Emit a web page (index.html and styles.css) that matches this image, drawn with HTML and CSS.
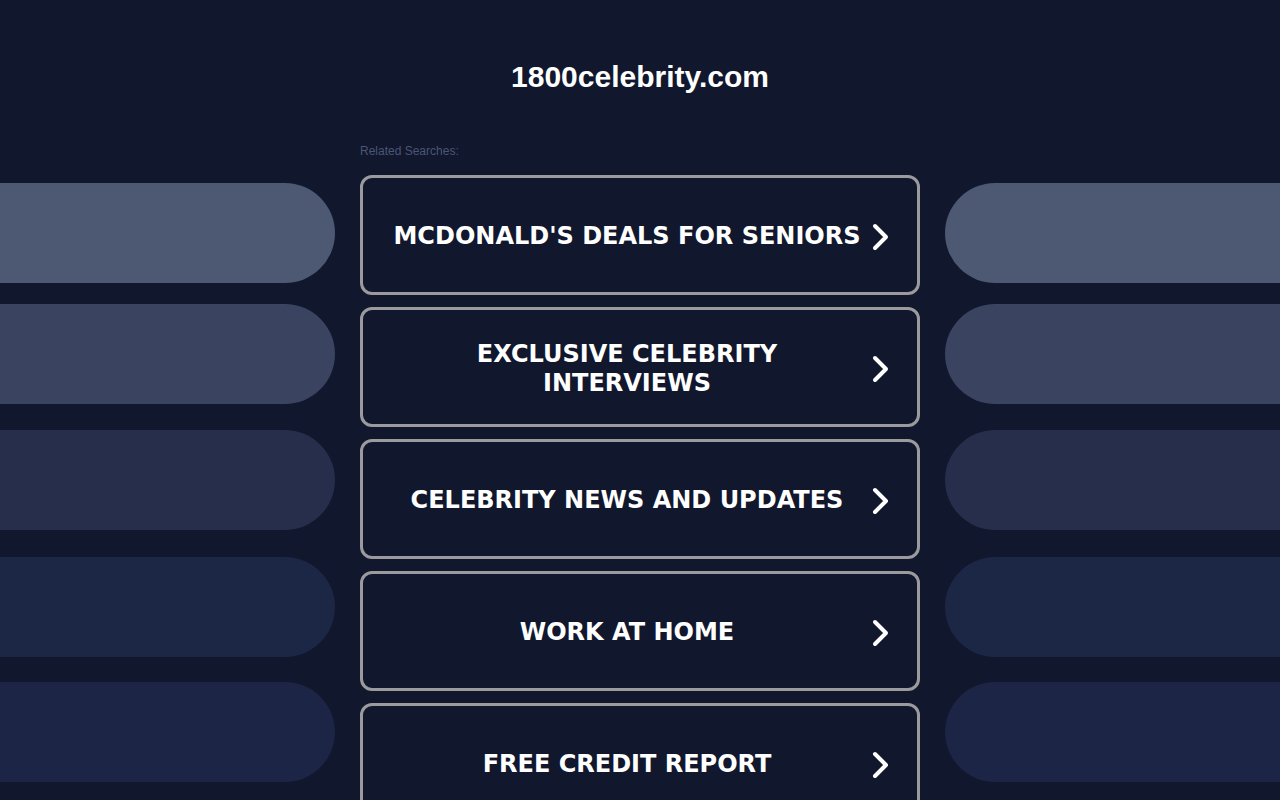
FILE: index.html
```html
<!DOCTYPE html>
<html>
<head>
<meta charset="utf-8">
<link rel="stylesheet" href="styles.css">
</head>
<body>
<div class="page">
  <div class="side side-left">
    <div class="pill p1"></div>
    <div class="pill p2"></div>
    <div class="pill p3"></div>
    <div class="pill p4"></div>
    <div class="pill p5"></div>
  </div>
  <main class="center">
    <h1 class="title">1800celebrity.com</h1>
    <div class="related">Related Searches:</div>
    <div class="list">
      <a class="btn" href="#"><span class="label">MCDONALD'S DEALS FOR SENIORS</span><svg class="chev" viewBox="0 0 22 28"><path d="M8 3 L19 14 L8 25" fill="none" stroke="#fff" stroke-width="4" stroke-linecap="round" stroke-linejoin="round"/></svg></a>
      <a class="btn" href="#"><span class="label">EXCLUSIVE CELEBRITY INTERVIEWS</span><svg class="chev" viewBox="0 0 22 28"><path d="M8 3 L19 14 L8 25" fill="none" stroke="#fff" stroke-width="4" stroke-linecap="round" stroke-linejoin="round"/></svg></a>
      <a class="btn" href="#"><span class="label">CELEBRITY NEWS AND UPDATES</span><svg class="chev" viewBox="0 0 22 28"><path d="M8 3 L19 14 L8 25" fill="none" stroke="#fff" stroke-width="4" stroke-linecap="round" stroke-linejoin="round"/></svg></a>
      <a class="btn" href="#"><span class="label">WORK AT HOME</span><svg class="chev" viewBox="0 0 22 28"><path d="M8 3 L19 14 L8 25" fill="none" stroke="#fff" stroke-width="4" stroke-linecap="round" stroke-linejoin="round"/></svg></a>
      <a class="btn" href="#"><span class="label">FREE CREDIT REPORT</span><svg class="chev" viewBox="0 0 22 28"><path d="M8 3 L19 14 L8 25" fill="none" stroke="#fff" stroke-width="4" stroke-linecap="round" stroke-linejoin="round"/></svg></a>
    </div>
  </main>
  <div class="side side-right">
    <div class="pill p1"></div>
    <div class="pill p2"></div>
    <div class="pill p3"></div>
    <div class="pill p4"></div>
    <div class="pill p5"></div>
  </div>
</div>
</body>
</html>
```
FILE: styles.css
```css
html, body {
  margin: 0;
  padding: 0;
  background: #11172d;
  height: 100%;
  overflow: hidden;
}
body {
  font-family: "Liberation Sans", Arial, sans-serif;
  color: #fff;
}
.page {
  display: grid;
  grid-template-columns: 1fr 560px 1fr;
  column-gap: 25px;
  width: 1280px;
}
.side {
  display: flex;
  flex-direction: column;
  padding-top: 183px;
}
.pill {
  height: 100px;
}
.side-left .pill { border-radius: 0 50px 50px 0; }
.side-right .pill { border-radius: 50px 0 0 50px; }
.p1 { background: #4d5873; }
.p2 { background: #3a4360; margin-top: 21px; }
.p3 { background: #262e4c; margin-top: 26px; }
.p4 { background: #1c2645; margin-top: 27px; }
.p5 { background: #1c2546; margin-top: 25px; }
.center {
  display: flex;
  flex-direction: column;
}
.title {
  margin: 59px 0 0;
  font-size: 30px;
  line-height: 36px;
  font-weight: bold;
  text-align: center;
  color: #fff;
}
.related {
  margin-top: 49px;
  font-size: 12px;
  line-height: 14px;
  color: #4a5676;
}
.list {
  margin-top: 17px;
  display: flex;
  flex-direction: column;
  gap: 12px;
}
.btn {
  box-sizing: border-box;
  height: 120px;
  border: 3px solid #9b9b9d;
  border-radius: 12px;
  display: flex;
  align-items: center;
  padding: 3px 28px 0 24px;
  text-decoration: none;
  color: #fff;
}
.label {
  flex: 1;
  box-sizing: border-box;
  padding: 0 5px;
  text-align: center;
  font-family: "DejaVu Sans", Verdana, sans-serif;
  font-weight: bold;
  font-size: 24px;
  line-height: 29px;
}
.chev {
  width: 22px;
  height: 28px;
  flex: none;
}
```
